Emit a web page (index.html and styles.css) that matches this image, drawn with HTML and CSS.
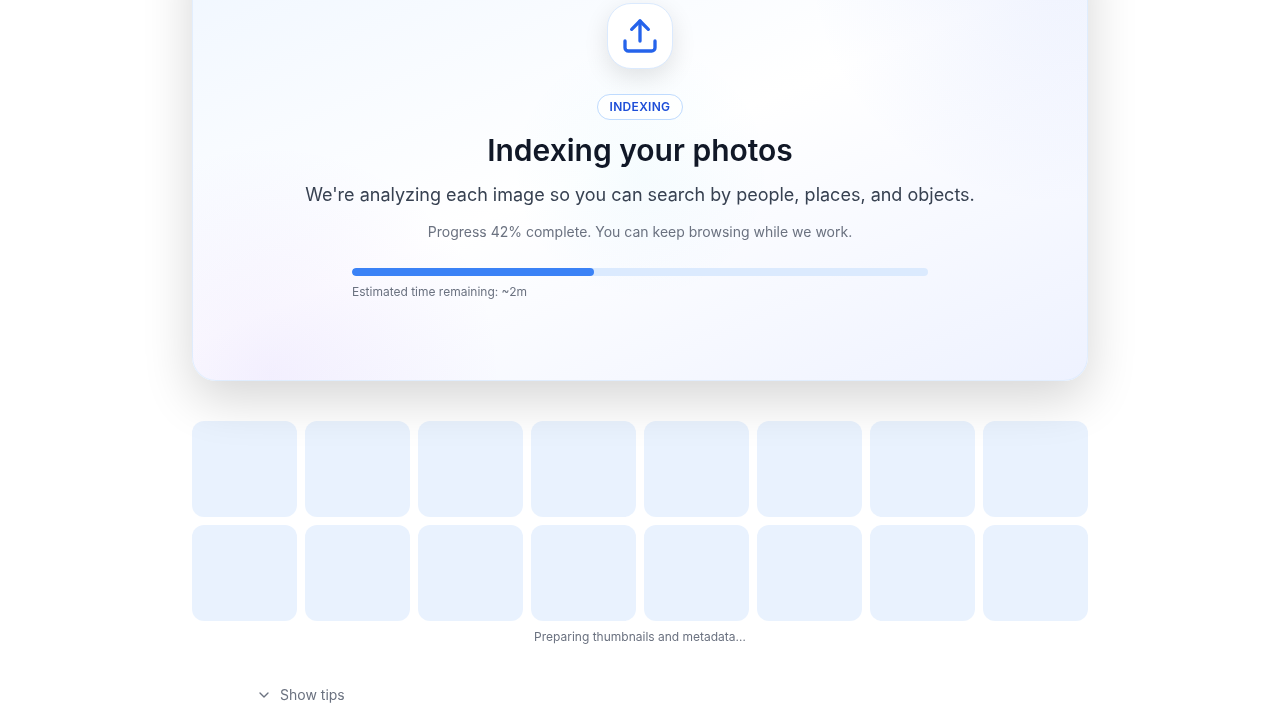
FILE: index.html
```html
<!DOCTYPE html>
<html lang="en">
<head>
<meta charset="utf-8">
<title>Indexing your photos</title>
<link rel="stylesheet" href="styles.css">
</head>
<body>
<main class="page">
  <section class="card">
    <div class="glow glow-top"></div>
    <div class="glow glow-bottom"></div>
    <div class="glow glow-center"></div>
    <div class="content">
      <div class="icon-tile">
        <svg width="40" height="40" viewBox="0 0 24 24" fill="none" stroke="currentColor" stroke-width="2" stroke-linecap="round" stroke-linejoin="round"><path d="M3 15v4a2 2 0 0 0 2 2h14a2 2 0 0 0 2-2v-4"/><path d="M7 8l5-5 5 5"/><path d="M12 3v12"/></svg>
      </div>
      <span class="badge">INDEXING</span>
      <h1 class="title">Indexing your photos</h1>
      <p class="lead">We're analyzing each image so you can search by people, places, and objects.</p>
      <p class="note">Progress 42% complete. You can keep browsing while we work.</p>
      <div class="progress">
        <div class="track"><div class="fill" style="width:42%"></div></div>
        <p class="eta">Estimated time remaining: ~2m</p>
      </div>
    </div>
  </section>
  <section class="thumbs">
    <div class="thumb"></div><div class="thumb"></div><div class="thumb"></div><div class="thumb"></div>
    <div class="thumb"></div><div class="thumb"></div><div class="thumb"></div><div class="thumb"></div>
    <div class="thumb"></div><div class="thumb"></div><div class="thumb"></div><div class="thumb"></div>
    <div class="thumb"></div><div class="thumb"></div><div class="thumb"></div><div class="thumb"></div>
  </section>
  <p class="preparing">Preparing thumbnails and metadata…</p>
  <div class="tips">
    <svg width="16" height="16" viewBox="0 0 24 24" fill="none" stroke="currentColor" stroke-width="2" stroke-linecap="round" stroke-linejoin="round"><path d="M6 9l6 6 6-6"/></svg>
    <span>Show tips</span>
  </div>
</main>
</body>
</html>
```
FILE: styles.css
```css
* { box-sizing: border-box; margin: 0; }
body { background: #fff; font-family: Inter, sans-serif; color: #111827; height: 720px; overflow: hidden; }
.page { display: flow-root; width: 896px; margin: -76px auto 0; will-change: transform; }
.card { position: relative; height: 457px; padding: 78px 64px; border: 1px solid rgba(219,234,254,.8); border-radius: 24px; background: linear-gradient(157deg, #eff6ff, #fff 50%, #eef2ff); box-shadow: 0 18px 50px rgba(0,0,0,.165); }
.glow { position: absolute; inset: 0; border-radius: 23px; }
.glow-top { background: radial-gradient(circle 250px at 864px 30px, rgba(79,120,246,.09), transparent); }
.glow-bottom { background: radial-gradient(circle 230px at 78px 450px, rgba(139,92,246,.085), transparent); }
.glow-center { background: radial-gradient(circle 130px at 448px 246px, rgba(34,190,238,.04), transparent); }
.content { position: relative; display: flex; flex-direction: column; align-items: center; }
.icon-tile { width: 66px; height: 66px; border: 1px solid #dbeafe; border-radius: 24px; background: #fff; color: #2563eb; display: flex; align-items: center; justify-content: center; box-shadow: 0 8px 24px rgba(0,0,0,.11); }
.badge { margin-top: 25px; height: 26px; padding: 0 12px; border: 1px solid #bfdbfe; border-radius: 13px; background: rgba(255,255,255,.8); color: #1d4ed8; font-size: 12px; line-height: 24px; font-weight: 600; letter-spacing: .3px; }
.title { margin-top: 12px; font-size: 30px; line-height: 36px; font-weight: 600; }
.lead { margin-top: 13px; font-size: 18px; line-height: 28px; color: #374151; }
.note { margin-top: 13px; font-size: 14px; line-height: 20px; color: #6b7280; }
.progress { width: 576px; margin-top: 26px; }
.track { height: 8px; border-radius: 4px; background: #dbeafe; overflow: hidden; }
.fill { height: 8px; border-radius: 4px; background: #3b82f6; }
.eta { margin-top: 8px; font-size: 12px; line-height: 16px; color: #6b7280; }
.thumbs { display: grid; grid-template-columns: repeat(8, 1fr); gap: 8px; margin-top: 40px; }
.thumb { height: 96px; border-radius: 12px; background: rgba(219,234,254,.6); }
.preparing { margin-top: 8px; font-size: 12px; line-height: 16px; text-align: center; color: #6b7280; }
.tips { display: flex; align-items: center; gap: 8px; margin: 40px 0 0 64px; font-size: 14px; line-height: 20px; color: #6b7280; }
```
